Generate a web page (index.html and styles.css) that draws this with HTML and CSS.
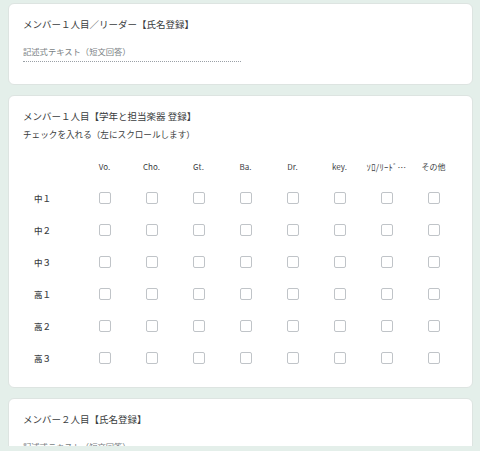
FILE: index.html
```html
<!DOCTYPE html>
<html lang="ja">
<head>
<meta charset="utf-8">
<title>フォーム</title>
<link rel="stylesheet" href="styles.css">
</head>
<body>
<div class="page">
  <section class="card">
    <div class="title">メンバー１人目／リーダー【氏名登録】</div>
    <div class="input"><span class="placeholder">記述式テキスト（短文回答）</span></div>
  </section>

  <section class="card">
    <div class="title">メンバー１人目【学年と担当楽器 登録】</div>
    <div class="subtitle">チェックを入れる（左にスクロールします）</div>
    <div class="grid">
      <div class="corner"></div>
      <div class="head">Vo.</div>
      <div class="head">Cho.</div>
      <div class="head">Gt.</div>
      <div class="head">Ba.</div>
      <div class="head">Dr.</div>
      <div class="head">key.</div>
      <div class="head"><span class="solo">ｿﾛ/ﾘｰﾄﾞ…</span></div>
      <div class="head">その他</div>

      <div class="label">中１</div>
      <div class="cell"><span class="box"></span></div><div class="cell"><span class="box"></span></div><div class="cell"><span class="box"></span></div><div class="cell"><span class="box"></span></div><div class="cell"><span class="box"></span></div><div class="cell"><span class="box"></span></div><div class="cell"><span class="box"></span></div><div class="cell"><span class="box"></span></div>

      <div class="label">中２</div>
      <div class="cell"><span class="box"></span></div><div class="cell"><span class="box"></span></div><div class="cell"><span class="box"></span></div><div class="cell"><span class="box"></span></div><div class="cell"><span class="box"></span></div><div class="cell"><span class="box"></span></div><div class="cell"><span class="box"></span></div><div class="cell"><span class="box"></span></div>

      <div class="label">中３</div>
      <div class="cell"><span class="box"></span></div><div class="cell"><span class="box"></span></div><div class="cell"><span class="box"></span></div><div class="cell"><span class="box"></span></div><div class="cell"><span class="box"></span></div><div class="cell"><span class="box"></span></div><div class="cell"><span class="box"></span></div><div class="cell"><span class="box"></span></div>

      <div class="label">高１</div>
      <div class="cell"><span class="box"></span></div><div class="cell"><span class="box"></span></div><div class="cell"><span class="box"></span></div><div class="cell"><span class="box"></span></div><div class="cell"><span class="box"></span></div><div class="cell"><span class="box"></span></div><div class="cell"><span class="box"></span></div><div class="cell"><span class="box"></span></div>

      <div class="label">高２</div>
      <div class="cell"><span class="box"></span></div><div class="cell"><span class="box"></span></div><div class="cell"><span class="box"></span></div><div class="cell"><span class="box"></span></div><div class="cell"><span class="box"></span></div><div class="cell"><span class="box"></span></div><div class="cell"><span class="box"></span></div><div class="cell"><span class="box"></span></div>

      <div class="label">高３</div>
      <div class="cell"><span class="box"></span></div><div class="cell"><span class="box"></span></div><div class="cell"><span class="box"></span></div><div class="cell"><span class="box"></span></div><div class="cell"><span class="box"></span></div><div class="cell"><span class="box"></span></div><div class="cell"><span class="box"></span></div><div class="cell"><span class="box"></span></div>
    </div>
  </section>

  <section class="card">
    <div class="title">メンバー２人目【氏名登録】</div>
    <div class="input"><span class="placeholder">記述式テキスト（短文回答）</span></div>
  </section>
</div>
</body>
</html>
```

FILE: styles.css
```css
html, body {
  margin: 0;
  padding: 0;
  background: #e4efea;
}
body {
  font-family: "Noto Sans CJK JP", "Noto Sans", sans-serif;
  color: #202124;
}
.page {
  height: 446px;
  overflow: hidden;
  padding: 3px 7px 0 8px;
  box-sizing: border-box;
  display: flex;
  flex-direction: column;
  gap: 10px;
}
.card {
  flex: none;
  background: #fff;
  border: 1px solid #dde4e1;
  border-radius: 6px;
  padding: 13px 14px 22px 14px;
}
.title {
  font-size: 9.5px;
  line-height: 15px;
  font-weight: 400;
  color: #3a3d40;
  white-space: nowrap;
}
.input {
  margin-top: 11px;
  width: 218px;
  font-size: 8.3px;
  line-height: 16px;
  height: 16px;
  padding-bottom: 2px;
  border-bottom: 1px dotted #9aa0a6;
}
.placeholder {
  color: #7a7f84;
}
.subtitle {
  margin-top: 3px;
  font-size: 8.6px;
  line-height: 14px;
  color: #3a3d40;
}
.card:nth-child(2) {
  padding-bottom: 13px;
}
.grid {
  margin-top: 10px;
  display: grid;
  grid-template-columns: 58px repeat(8, 47px);
  grid-template-rows: 31px repeat(6, 32px);
}
.head {
  display: flex;
  align-items: center;
  justify-content: center;
  font-size: 8px;
  color: #3c4043;
}
.solo {
  font-size: 8.6px;
  letter-spacing: 0.3px;
  white-space: nowrap;
}
.label {
  display: flex;
  align-items: center;
  padding-left: 11px;
  font-size: 8.5px;
  font-weight: 500;
  color: #3c4043;
}
.cell {
  display: flex;
  align-items: center;
  justify-content: center;
}
.box {
  display: block;
  width: 10px;
  height: 10px;
  border: 1.2px solid #c0c4c8;
  border-radius: 2px;
}
```
